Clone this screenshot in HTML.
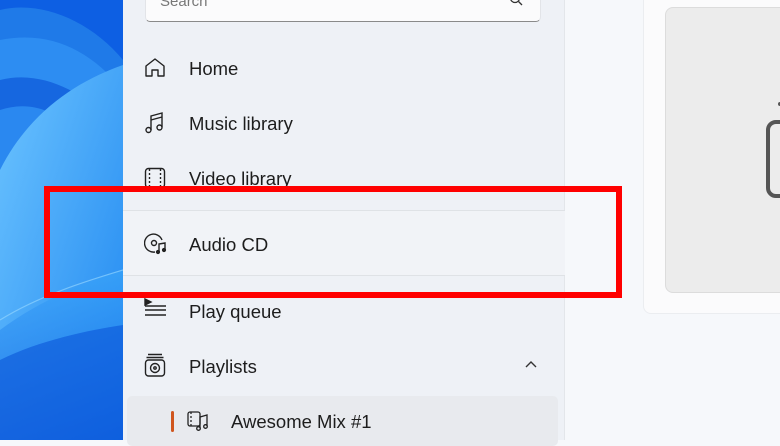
<!DOCTYPE html>
<html><head><style>
*{margin:0;padding:0;box-sizing:border-box}
body{width:780px;height:440px;overflow:hidden;position:relative;font-family:"Liberation Sans",sans-serif;background:#f6f8fb}
.wall{position:absolute;left:0;top:0;width:123px;height:440px;overflow:hidden}
.side{position:absolute;left:123px;top:0;width:442px;height:440px;background:#eef1f6;border-right:1px solid #e3e6ea}
.t{position:absolute;left:66px;font-size:18.5px;color:#1d1d1d}
.ic{position:absolute;left:21px}
</style></head><body>
<div class="wall">
<svg width="123" height="440" viewBox="0 0 123 440">
<defs><linearGradient id="g1" x1="0" y1="0" x2="1" y2="1"><stop offset="0" stop-color="#6cc4ff"/><stop offset="1" stop-color="#1e86f0"/></linearGradient>
<linearGradient id="g2" x1="0" y1="0" x2="0" y2="1"><stop offset="0" stop-color="#3aa6fa"/><stop offset="1" stop-color="#0f5fe0"/></linearGradient></defs>
<rect width="123" height="440" fill="#0d5fe3"/>
<path d="M0 10 C40 0 90 20 123 60 L123 440 L0 440Z" fill="#1f7ae8"/>
<path d="M0 40 C50 30 90 50 123 90 L123 440 L0 440Z" fill="#2d8df2"/>
<path d="M0 80 C40 70 80 90 110 120 L123 130 L123 440 L0 440Z" fill="#1667e0"/>
<path d="M0 110 C30 100 60 110 80 140 L123 150 L123 440 L0 440Z" fill="#2a88f0"/>
<path d="M0 170 C30 110 80 80 123 65 L123 440 L0 440Z" fill="url(#g1)"/>
<path d="M0 330 C40 300 90 280 123 270 L123 440 L0 440Z" fill="url(#g2)" opacity="0.6"/>
<path d="M0 320 C40 295 90 280 123 270" stroke="#8fd3ff" stroke-width="1.2" fill="none" opacity="0.7"/>
<path d="M0 440 L0 360 C40 340 90 330 123 325 L123 440Z" fill="#0a55d8" opacity="0.6"/>
</svg>
</div>
<div class="side">
<div style="position:absolute;left:22px;top:-12px;width:396px;height:34px;background:#fbfbfc;border:1px solid #e2e4e8;border-bottom:1.5px solid #8a8a8a;border-radius:5px"></div>
<div style="position:absolute;left:37px;top:-7px;font-size:15px;color:#777">Search</div>
<svg style="position:absolute;left:386px;top:-6px" width="14" height="14" viewBox="0 0 14 14"><circle cx="6" cy="4" r="4.5" stroke="#333" stroke-width="1.3" fill="none"/><path d="M9.5 7.5 L13 11" stroke="#333" stroke-width="1.3"/></svg>

<svg class="ic" style="top:57px" width="22" height="22" viewBox="0 0 22 22" fill="none" stroke="#222" stroke-width="1.4"><path d="M2 19 V9 L11 2 L20 9 V19 H14 V13 H8 V19Z" stroke-linejoin="round"/></svg>
<div class="t" style="top:58px">Home</div>
<svg class="ic" style="top:111px" width="22" height="24" viewBox="0 0 22 24" fill="none" stroke="#222" stroke-width="1.4"><path d="M7 19 V5 L18 2 V16"/><path d="M7 9 L18 6"/><circle cx="4.5" cy="19" r="2.5"/><circle cx="15.5" cy="16.5" r="2.5"/></svg>
<div class="t" style="top:113px">Music library</div>
<svg class="ic" style="top:167px" width="22" height="22" viewBox="0 0 22 22" fill="none" stroke="#222" stroke-width="1.4"><rect x="1.5" y="1.5" width="19" height="19" rx="3"/><path d="M5.5 2 V20 M16.5 2 V20" stroke-dasharray="2 2"/></svg>
<div class="t" style="top:168px">Video library</div>

<div style="position:absolute;left:0;top:210px;width:442px;height:66px;background:#f1f3f7;border-top:1px solid #dfe2e6;border-bottom:1px solid #dfe2e6"></div>
<svg class="ic" style="top:233px" width="24" height="22" viewBox="0 0 24 22" fill="none" stroke="#222" stroke-width="1.4"><path d="M18 7 A9 9 0 1 0 11 19"/><circle cx="10" cy="10" r="2.5"/><path d="M15 19 V11 L21 10 V17"/><circle cx="14" cy="19" r="1.4" fill="#222"/><circle cx="20" cy="17" r="1.4" fill="#222"/></svg>
<div class="t" style="top:234px">Audio CD</div>

<svg class="ic" style="top:297px" width="24" height="22" viewBox="0 0 24 22" fill="none" stroke="#222" stroke-width="1.4"><path d="M1 2 L7 5 L1 8Z" fill="#222"/><path d="M1 9 H22 M1 13 H22 M1 18 H22"/></svg>
<div class="t" style="top:301px">Play queue</div>
<svg class="ic" style="top:353px" width="22" height="24" viewBox="0 0 22 24" fill="none" stroke="#222" stroke-width="1.4"><path d="M4 1.5 H18 M2.5 4.5 H19.5"/><rect x="1.5" y="7" width="19" height="16" rx="3"/><circle cx="11" cy="15" r="4.5"/><circle cx="11" cy="15" r="1.2"/></svg>
<div class="t" style="top:356px">Playlists</div>
<svg style="position:absolute;left:401px;top:360px" width="14" height="10" viewBox="0 0 14 10"><path d="M2 7 L7 2 L12 7" stroke="#333" stroke-width="1.4" fill="none"/></svg>

<div style="position:absolute;left:4px;top:396px;width:431px;height:50px;background:#e8eaee;border-radius:5px"></div>
<div style="position:absolute;left:48px;top:411px;width:3px;height:21px;background:#d0561e;border-radius:2px"></div>
<svg style="position:absolute;left:64px;top:410px" width="22" height="22" viewBox="0 0 22 22" fill="none" stroke="#222" stroke-width="1.3"><rect x="1" y="2" width="12" height="14" rx="2"/><path d="M4 2 V16" stroke-dasharray="2 2"/><path d="M13 18 V7 L20 5 V16"/><circle cx="11.5" cy="18.5" r="1.8"/><circle cx="18.5" cy="16.5" r="1.8"/></svg>
<div class="t" style="left:108px;top:411px">Awesome Mix #1</div>
</div>

<div style="position:absolute;left:643px;top:-10px;width:150px;height:324px;background:#fbfbfc;border:1px solid #ebedf0;border-radius:8px"></div>
<div style="position:absolute;left:665px;top:7px;width:130px;height:286px;background:#ececec;border:1px solid #dcdcdc;border-radius:8px"></div>
<svg style="position:absolute;left:765px;top:100px" width="15" height="100" viewBox="0 0 15 100"><rect x="3" y="22" width="30" height="74" rx="8" stroke="#555" stroke-width="4" fill="none"/><circle cx="15" cy="4" r="2" fill="#555"/></svg>

<div style="position:absolute;left:44px;top:186px;width:578px;height:112px;border:6px solid #f00"></div>
</body></html>
